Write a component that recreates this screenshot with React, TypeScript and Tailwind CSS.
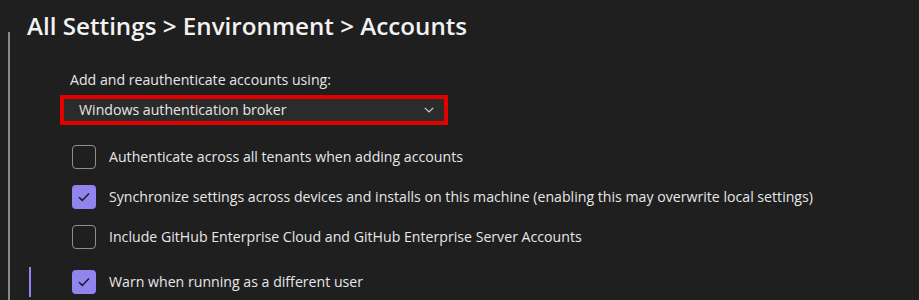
import React from 'react';

interface Option {
  label: string;
  checked: boolean;
  active?: boolean;
}

const options: Option[] = [
  { label: 'Authenticate across all tenants when adding accounts', checked: false },
  {
    label:
      'Synchronize settings across devices and installs on this machine (enabling this may overwrite local settings)',
    checked: true,
  },
  { label: 'Include GitHub Enterprise Cloud and GitHub Enterprise Server Accounts', checked: false },
  { label: 'Warn when running as a different user', checked: true, active: true },
];

function Checkbox({ checked }: { checked: boolean }) {
  if (checked) {
    return (
      <div className="flex h-[24px] w-[24px] shrink-0 items-center justify-center rounded-[4px] bg-[#9184ee]">
        <svg width="12" height="10" viewBox="0 0 12 10" fill="none">
          <path d="M1 5.2 L4.3 8.4 L11 1.4" stroke="#1a1a1a" strokeWidth="1.5" />
        </svg>
      </div>
    );
  }
  return <div className="h-[24px] w-[24px] shrink-0 rounded-[4px] border border-[#8f8f8f]" />;
}

export default function App() {
  return (
    <div
      className="h-[300px] w-[919px] overflow-hidden bg-[#1f1f1f] text-[#e6e6e6]"
      style={{ fontFamily: '"Open Sans", "Noto Sans", sans-serif' }}
    >
      {/* Breadcrumb title */}
      <div className="h-[32px] pl-[27px] pt-[10px] text-[24.2px] font-semibold leading-[32px] text-[#f2f2f2]">
        All Settings &gt; Environment &gt; Accounts
      </div>

      <div className="ml-[8px] h-[268px] border-l-2 border-[#8a8a8a] pl-[50px] pt-[38px]">
        <div className="pl-[10px] text-[14.15px] leading-[20px]">Add and reauthenticate accounts using:</div>

        {/* Dropdown, outlined in red */}
        <div className="mt-[5px] w-[388px] border-4 border-[#e50000]">
          <div className="flex h-[22px] items-center justify-between bg-[#2b2b2b] pl-[15px] pr-[10px] text-[14.15px]">
            <span>Windows authentication broker</span>
            <svg width="10" height="6" viewBox="0 0 10 6" fill="none">
              <path d="M0.8 0.8 L5 5 L9.2 0.8" stroke="#d0d0d0" strokeWidth="1.2" />
            </svg>
          </div>
        </div>

        <div className="mt-[17px] -ml-[31px] flex flex-col">
          {options.map((opt, i) => (
            <div key={opt.label} className={`flex h-[30px] items-center ${i === 3 ? 'mt-[15px]' : i > 0 ? 'mt-[10px]' : ''}`}>
              <div className={`h-[30px] w-[2px] ${opt.active ? 'bg-[#9184ee]' : ''}`} />
              <div className="ml-[41px]">
                <Checkbox checked={opt.checked} />
              </div>
              <span className="ml-[13px] whitespace-nowrap text-[14.15px]">{opt.label}</span>
            </div>
          ))}
        </div>
      </div>
    </div>
  );
}
